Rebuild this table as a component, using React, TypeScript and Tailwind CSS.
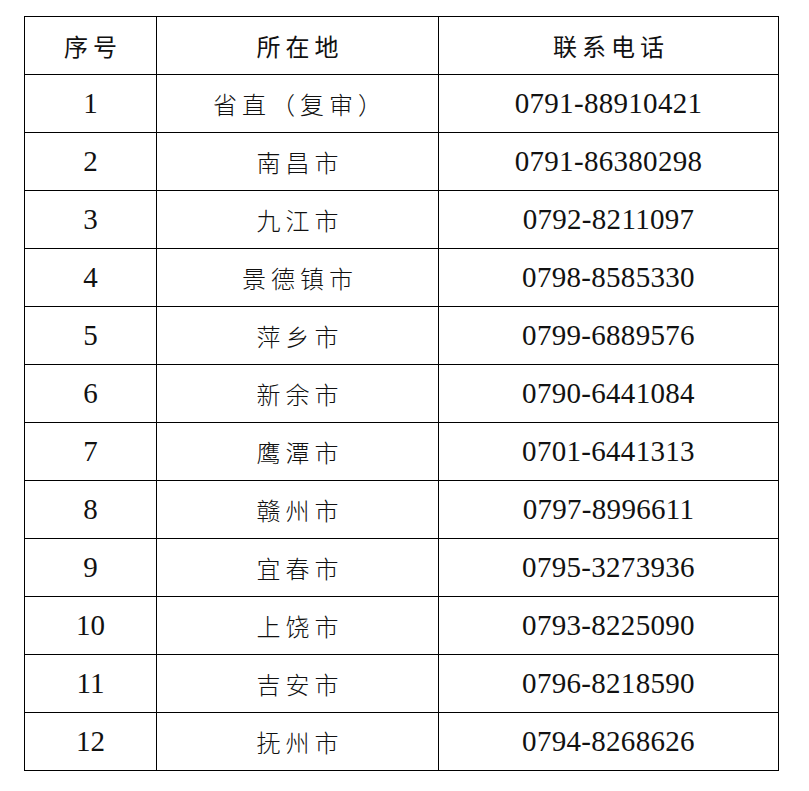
const rows = [
  { no: "1", place: "省直（复审）", tel: "0791-88910421" },
  { no: "2", place: "南昌市", tel: "0791-86380298" },
  { no: "3", place: "九江市", tel: "0792-8211097" },
  { no: "4", place: "景德镇市", tel: "0798-8585330" },
  { no: "5", place: "萍乡市", tel: "0799-6889576" },
  { no: "6", place: "新余市", tel: "0790-6441084" },
  { no: "7", place: "鹰潭市", tel: "0701-6441313" },
  { no: "8", place: "赣州市", tel: "0797-8996611" },
  { no: "9", place: "宜春市", tel: "0795-3273936" },
  { no: "10", place: "上饶市", tel: "0793-8225090" },
  { no: "11", place: "吉安市", tel: "0796-8218590" },
  { no: "12", place: "抚州市", tel: "0794-8268626" },
];

const cjk = { fontFamily: '"Noto Sans CJK SC", "Liberation Serif", sans-serif' };
const num = { fontFamily: '"Liberation Serif", "Noto Sans CJK SC", serif' };

export default function App() {
  return (
    <div className="w-[809px] h-[791px] bg-white pt-[16px] pl-[24px]">
      <table className="border-collapse table-fixed w-[754px] text-[#111]">
        <colgroup>
          <col className="w-[132px]" />
          <col className="w-[282px]" />
          <col className="w-[340px]" />
        </colgroup>
        <thead>
          <tr className="h-[58px]">
            {["序号", "所在地", "联系电话"].map((h) => (
              <th
                key={h}
                style={cjk}
                className="border border-black p-0 text-center align-middle text-[24px] font-normal tracking-[5px] pl-[5px]"
              >
                {h}
              </th>
            ))}
          </tr>
        </thead>
        <tbody>
          {rows.map((r) => (
            <tr key={r.no} className="h-[58px]">
              <td style={num} className="border border-black p-0 text-center align-middle text-[29px]">
                {r.no}
              </td>
              <td
                style={cjk}
                className="border border-black p-0 text-center align-middle text-[24px] font-light tracking-[5px] pl-[5px]"
              >
                {r.place}
              </td>
              <td
                style={num}
                className="border border-black p-0 text-center align-middle text-[29px] tracking-[0.3px]"
              >
                {r.tel}
              </td>
            </tr>
          ))}
        </tbody>
      </table>
    </div>
  );
}
